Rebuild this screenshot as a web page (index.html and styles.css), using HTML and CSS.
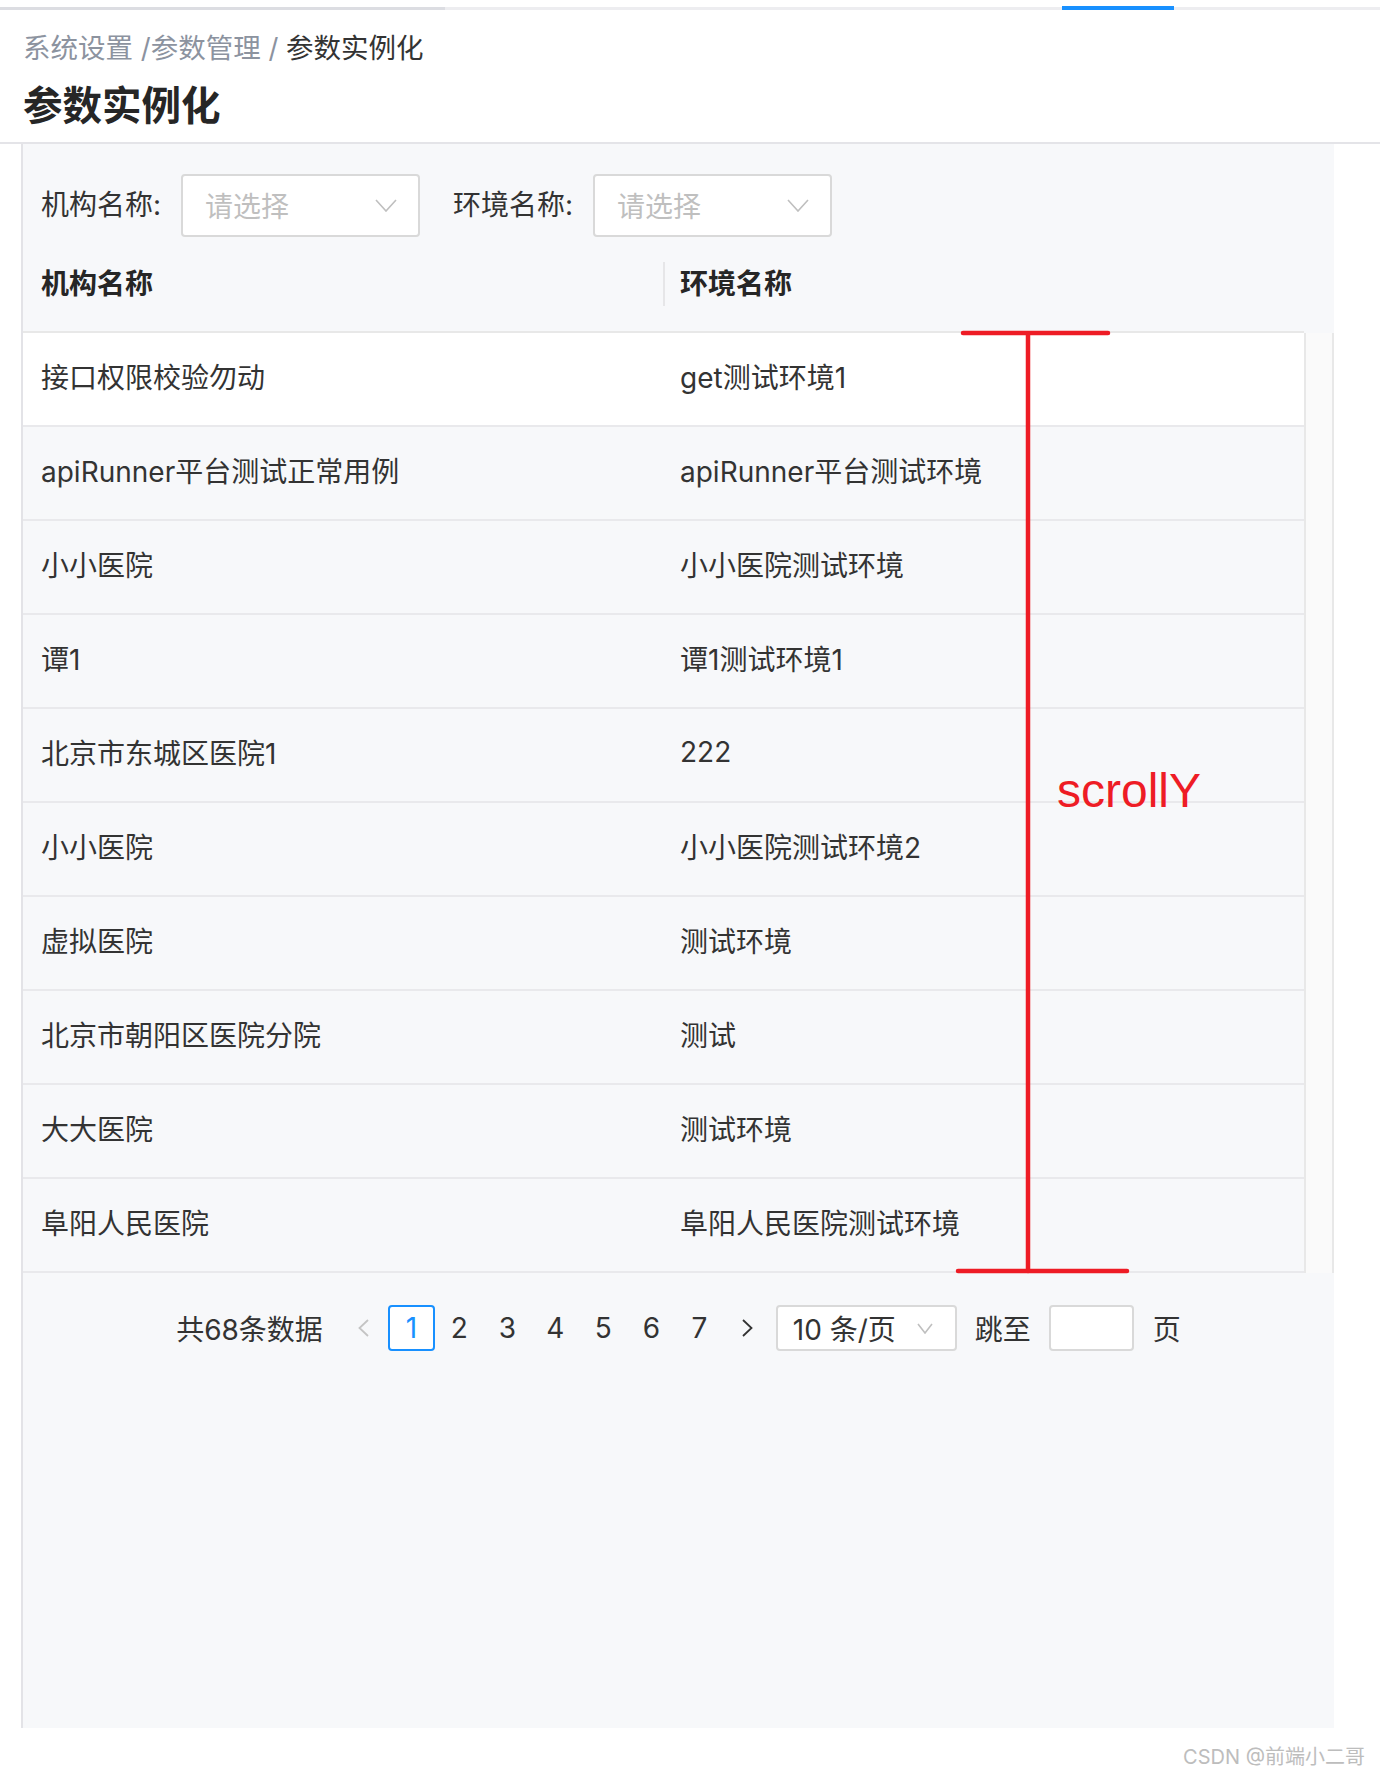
FILE: index.html
```html
<!DOCTYPE html>
<html lang="zh-CN">
<head>
<meta charset="utf-8">
<title>参数实例化</title>
<link rel="stylesheet" href="styles.css">
</head>
<body>
<div class="tabbar">
  <span class="tab-seg tab-dark"></span>
  <span class="tab-seg tab-gap"></span>
  <span class="tab-seg tab-active"></span>
  <span class="tab-seg tab-fill"></span>
</div>
<header class="page-header">
  <nav class="breadcrumb"><span class="crumb">系统设置 /</span><span class="crumb">参数管理 /</span> <span class="crumb crumb-current">参数实例化</span></nav>
  <h1 class="title">参数实例化</h1>
</header>
<main class="content">
  <div class="filters">
    <label class="filter-label">机构名称:</label>
    <div class="select">
      <span class="placeholder">请选择</span>
      <svg class="chev" width="22" height="13" viewBox="0 0 22 13"><polyline points="1,1 11,12 21,1" fill="none" stroke="#bfbfbf" stroke-width="1.6"/></svg>
    </div>
    <label class="filter-label filter-gap">环境名称:</label>
    <div class="select">
      <span class="placeholder">请选择</span>
      <svg class="chev" width="22" height="13" viewBox="0 0 22 13"><polyline points="1,1 11,12 21,1" fill="none" stroke="#bfbfbf" stroke-width="1.6"/></svg>
    </div>
  </div>
  <div class="table">
    <div class="thead">
      <div class="th-row">
        <div class="th col1">机构名称</div>
        <div class="th col2 th-sep">环境名称</div>
      </div>
      <div class="th-gutter"></div>
    </div>
    <div class="tbody-wrap">
      <div class="tbody">
        <div class="tr tr-hover"><div class="td col1">接口权限校验勿动</div><div class="td col2">get测试环境1</div></div>
        <div class="tr"><div class="td col1">apiRunner平台测试正常用例</div><div class="td col2">apiRunner平台测试环境</div></div>
        <div class="tr"><div class="td col1">小小医院</div><div class="td col2">小小医院测试环境</div></div>
        <div class="tr"><div class="td col1">谭1</div><div class="td col2">谭1测试环境1</div></div>
        <div class="tr"><div class="td col1">北京市东城区医院1</div><div class="td col2">222</div></div>
        <div class="tr"><div class="td col1">小小医院</div><div class="td col2">小小医院测试环境2</div></div>
        <div class="tr"><div class="td col1">虚拟医院</div><div class="td col2">测试环境</div></div>
        <div class="tr"><div class="td col1">北京市朝阳区医院分院</div><div class="td col2">测试</div></div>
        <div class="tr"><div class="td col1">大大医院</div><div class="td col2">测试环境</div></div>
        <div class="tr"><div class="td col1">阜阳人民医院</div><div class="td col2">阜阳人民医院测试环境</div></div>
      </div>
      <div class="scroll-track"></div>
      <svg class="annot" width="1311" height="950" viewBox="0 0 1311 950">
        <g stroke="#ee1c25" stroke-width="4.5" stroke-linecap="round" fill="none">
          <line x1="940" y1="4" x2="1085" y2="4"/>
          <line x1="1005" y1="5" x2="1005" y2="942"/>
          <line x1="935" y1="942" x2="1104" y2="942"/>
        </g>
        <text x="1034" y="478" class="annot-text">scrollY</text>
      </svg>
    </div>
  </div>
  <div class="pagination">
    <span class="total">共68条数据</span>
    <span class="page-item page-prev"><svg width="11" height="18" viewBox="0 0 11 18"><polyline points="10,1 1.5,9 10,17" fill="none" stroke="#c4c4c4" stroke-width="1.8"/></svg></span>
    <span class="page-item page-active">1</span>
    <span class="page-item">2</span>
    <span class="page-item">3</span>
    <span class="page-item">4</span>
    <span class="page-item">5</span>
    <span class="page-item">6</span>
    <span class="page-item">7</span>
    <span class="page-item"><svg width="11" height="18" viewBox="0 0 11 18"><polyline points="1,1 9.5,9 1,17" fill="none" stroke="#333" stroke-width="1.8"/></svg></span>
    <span class="size-changer">10 条/页<svg class="chev" width="16" height="11" viewBox="0 0 16 11"><polyline points="1,1 8,10 15,1" fill="none" stroke="#bfbfbf" stroke-width="1.6"/></svg></span>
    <span class="jump-label">跳至</span>
    <span class="jump-input"></span>
    <span class="jump-unit">页</span>
  </div>
</main>
<footer class="watermark">CSDN @前端小二哥</footer>
</body>
</html>
```

FILE: styles.css
```css
* { box-sizing: border-box; }
html, body { margin: 0; padding: 0; }
body {
  width: 1380px;
  height: 1776px;
  background: #fff;
  font-family: Inter, "Noto Sans CJK SC", sans-serif;
  font-size: 28px;
  color: #333;
  overflow: hidden;
}

.tabbar { display: flex; align-items: flex-end; height: 10px; }
.tab-seg { display: block; height: 3px; }
.tab-dark { width: 445px; background: #dcdde2; }
.tab-gap { width: 617px; background: #ededf0; }
.tab-active { width: 112px; height: 4px; background: #1890ff; }
.tab-fill { flex: 1; background: #ededf0; }

.page-header { padding: 18px 23px 8px; border-bottom: 2px solid #e4e4e8; }
.breadcrumb { font-size: 27.5px; line-height: 40px; color: #8c939f; white-space: pre; }
.crumb-current { color: #333; }
.title { margin: 10px 0 0; font-size: 39.5px; line-height: 56px; font-weight: 700; color: #262626; }

.content {
  margin-left: 21px;
  width: 1313px;
  height: 1584px;
  background: #f7f8fa;
  border-left: 2px solid #e3e3e7;
}
.filters { display: flex; align-items: center; height: 93px; padding: 30px 0 0 18px; }
.filter-label { width: 140px; line-height: 63px; color: #333; }
.filter-gap { margin-left: 33px; }
.select {
  width: 239px;
  height: 63px;
  background: #fff;
  border: 2px solid #d9d9d9;
  border-radius: 4px;
  display: flex;
  align-items: center;
  padding: 0 21px 0 22px;
}
.placeholder { color: #bfbfbf; padding-bottom: 2px; }
.chev { margin-left: auto; display: block; }

.thead { display: flex; }
.th-row {
  display: flex;
  align-items: center;
  width: 1281px;
  height: 96px;
  border-bottom: 2px solid #e8e8e8;
}
.th-gutter { width: 30px; }
.th { font-weight: 700; line-height: 44px; height: 44px; color: #262626; }
.col1 { width: 640px; flex: none; padding-left: 18px; }
.col2 { flex: 1; padding-left: 17px; }
.th-sep { border-left: 2px solid #e6e6e8; padding-left: 15px; }

.tbody-wrap { display: flex; position: relative; }
.tbody { width: 1281px; }
.tr {
  display: flex;
  align-items: center;
  height: 94px;
  padding-bottom: 6px;
  border-bottom: 2px solid #e9e9ec;
  background: #f7f8fa;
}
.tr-hover { background: #fff; }
.td { white-space: nowrap; }
.scroll-track {
  width: 30px;
  border-left: 2px solid #e8e8e8;
  border-right: 2px solid #e8e8e8;
  background: #fafafa;
}
.annot { position: absolute; left: 0; top: -4px; pointer-events: none; overflow: visible; }
.annot-text { font-family: "Liberation Sans", Arial, sans-serif; font-size: 48px; fill: #ee1c25; }

.pagination {
  display: flex;
  justify-content: center;
  align-items: center;
  height: 46px;
  margin-top: 32px;
}
.total { margin-right: 17px; }
.page-item {
  width: 47px;
  height: 46px;
  margin-right: 1px;
  display: flex;
  align-items: center;
  justify-content: center;
  border: 2px solid transparent;
  border-radius: 4px;
  color: #333;
}
.page-active { border-color: #1890ff; color: #1890ff; background: #fff; }
.size-changer {
  margin-left: 4px;
  width: 181px;
  height: 46px;
  display: flex;
  align-items: center;
  padding: 0 22px 0 15px;
  background: #fff;
  border: 2px solid #d9d9d9;
  border-radius: 4px;
  white-space: pre;
}
.jump-label { margin-left: 18px; }
.jump-input {
  margin-left: 18px;
  width: 85px;
  height: 46px;
  background: #fff;
  border: 2px solid #d9d9d9;
  border-radius: 4px;
}
.jump-unit { margin-left: 19px; }

.watermark {
  padding: 17px 15px 0 0;
  text-align: right;
  font-size: 20px;
  line-height: 24px;
  color: #bdbdbd;
}
```
